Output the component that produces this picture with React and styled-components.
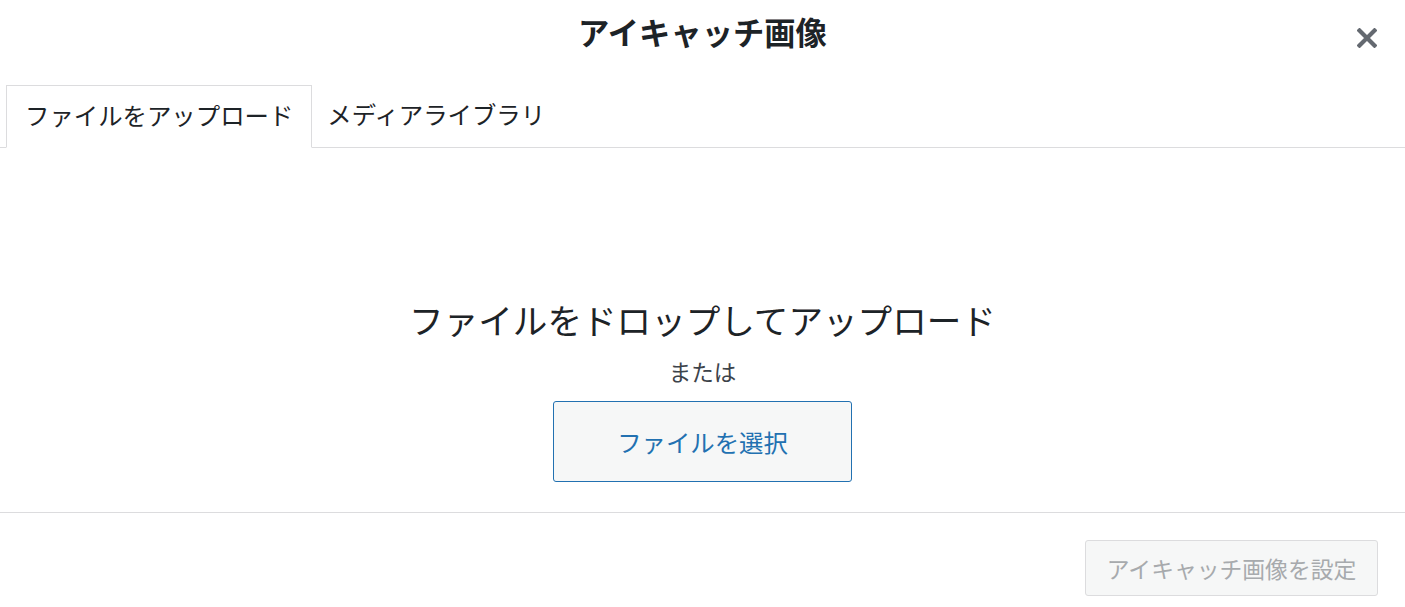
import React from "react";
import styled, { createGlobalStyle } from "styled-components";

const Global = createGlobalStyle`
  html, body { margin: 0; padding: 0; background: #fff; }
  body { font-family: "Noto Sans CJK JP", "Noto Sans", sans-serif; color: #1d2327; }
`;

const Modal = styled.div`
  width: 1405px;
  height: 607px;
  display: flex;
  flex-direction: column;
  background: #fff;
`;

const Header = styled.header`
  height: 70px;
  display: grid;
  grid-template-columns: 1fr auto 1fr;
  align-items: center;
`;

const Title = styled.h1`
  grid-column: 2;
  margin: 0;
  font-size: 31.3px;
  font-weight: 700;
  line-height: 1;
  color: #1d2327;
  transform: translateY(-3px);
`;

const CloseButton = styled.button`
  grid-column: 3;
  justify-self: end;
  margin-right: 23px;
  margin-top: 6px;
  width: 30px;
  height: 30px;
  padding: 0;
  border: none;
  background: transparent;
  display: flex;
  align-items: center;
  justify-content: center;
  color: #646970;
  cursor: pointer;
`;

const TabBar = styled.nav`
  margin-top: 15px;
  display: flex;
  align-items: flex-end;
  padding-left: 6px;
  border-bottom: 1px solid #dcdcde;
`;

const Tab = styled.button`
  height: ${(p) => (p.$active ? "63px" : "62px")};
  margin-bottom: ${(p) => (p.$active ? "-1px" : "0")};
  padding: 0 ${(p) => (p.$active ? "18px" : "14px")};
  padding-bottom: 3px;
  font-family: inherit;
  font-size: 24.4px;
  line-height: 1;
  color: #1d2327;
  background: ${(p) => (p.$active ? "#fff" : "transparent")};
  border: 1px solid ${(p) => (p.$active ? "#dcdcde" : "transparent")};
  border-bottom-color: ${(p) => (p.$active ? "#fff" : "transparent")};
  cursor: pointer;
`;

const Body = styled.main`
  height: 364px;
  display: flex;
  flex-direction: column;
  align-items: center;
  padding-top: 149px;
  box-sizing: border-box;
`;

const DropText = styled.p`
  margin: 0;
  font-size: 34.6px;
  line-height: 44px;
  color: #1d2327;
`;

const OrText = styled.p`
  margin: 14px 0 0;
  font-size: 22.5px;
  line-height: 33px;
  color: #3c434a;
`;

const SelectButton = styled.button`
  margin-top: 13px;
  width: 299px;
  height: 81px;
  box-sizing: border-box;
  font-family: inherit;
  font-size: 24.4px;
  color: #2271b1;
  background: #f6f7f7;
  border: 1px solid #2271b1;
  border-radius: 3px;
  cursor: pointer;
`;

const Footer = styled.footer`
  flex: 1;
  border-top: 1px solid #dcdcde;
  display: flex;
  justify-content: flex-end;
  align-items: flex-start;
  padding: 27px 27px 0 0;
`;

const SetButton = styled.button`
  width: 293px;
  height: 56px;
  box-sizing: border-box;
  font-family: inherit;
  font-size: 22.8px;
  color: #a7aaad;
  background: #f6f7f7;
  border: 1px solid #dcdcde;
  border-radius: 3px;
  cursor: default;
`;

export default function App() {
  return (
    <>
      <Global />
      <Modal>
        <Header>
          <Title>アイキャッチ画像</Title>
          <CloseButton aria-label="閉じる">
            <svg width="20" height="20" viewBox="0 0 20 20">
              <path d="M2.5 2.5 L17.5 17.5 M17.5 2.5 L2.5 17.5" stroke="currentColor" strokeWidth="4.2" strokeLinecap="square" />
            </svg>
          </CloseButton>
        </Header>
        <TabBar>
          <Tab $active>ファイルをアップロード</Tab>
          <Tab>メディアライブラリ</Tab>
        </TabBar>
        <Body>
          <DropText>ファイルをドロップしてアップロード</DropText>
          <OrText>または</OrText>
          <SelectButton>ファイルを選択</SelectButton>
        </Body>
        <Footer>
          <SetButton>アイキャッチ画像を設定</SetButton>
        </Footer>
      </Modal>
    </>
  );
}
